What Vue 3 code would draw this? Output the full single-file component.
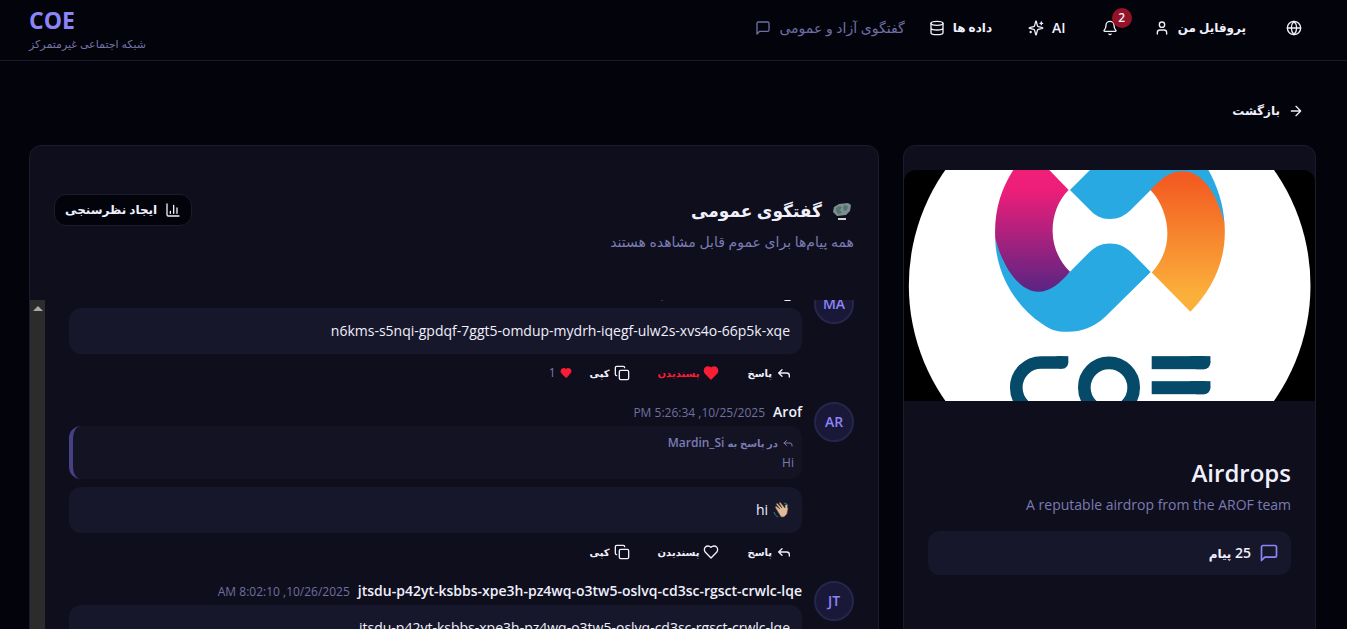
<script setup>
const messages = [
  {
    id: 1,
    initials: 'MA',
    author: 'Mardin_Si',
    date: '10/25/2025, 5:20:07 PM',
    text: 'n6kms-s5nqi-gpdqf-7ggt5-omdup-mydrh-iqegf-ulw2s-xvs4o-66p5k-xqe',
    liked: true,
    likes: 1,
  },
  {
    id: 2,
    initials: 'AR',
    author: 'Arof',
    date: '10/25/2025, 5:26:34 PM',
    replyTo: { author: 'Mardin_Si', text: 'Hi' },
    text: 'hi',
    wave: true,
  },
  {
    id: 3,
    initials: 'JT',
    author: 'jtsdu-p42yt-ksbbs-xpe3h-pz4wq-o3tw5-oslvq-cd3sc-rgsct-crwlc-lqe',
    date: '10/26/2025, 8:02:10 AM',
    text: 'jtsdu-p42yt-ksbbs-xpe3h-pz4wq-o3tw5-oslvq-cd3sc-rgsct-crwlc-lqe',
  },
]
</script>

<template>
  <div class="page" dir="rtl">
    <header class="topbar">
      <nav class="nav">
        <button type="button" class="nav-btn" aria-label="زبان">
          <svg class="icon" viewBox="0 0 24 24"><circle cx="12" cy="12" r="10" /><path d="M12 2a14.5 14.5 0 0 0 0 20 14.5 14.5 0 0 0 0-20M2 12h20" /></svg>
        </button>
        <a href="#profile" class="nav-btn">
          <span class="fa">پروفایل من</span>
          <svg class="icon" viewBox="0 0 24 24"><circle cx="12" cy="7" r="4" /><path d="M19 21v-2a4 4 0 0 0-4-4H9a4 4 0 0 0-4 4v2" /></svg>
        </a>
        <button type="button" class="nav-btn bell" aria-label="اعلان‌ها">
          <svg class="icon" viewBox="0 0 24 24"><path d="M10.3 21a2 2 0 0 0 3.4 0M3.3 15.3A1 1 0 0 0 4 17h16a1 1 0 0 0 .7-1.7C19.4 14 18 12.5 18 8A6 6 0 0 0 6 8c0 4.500-1.400 6-2.700 7.300" /></svg>
          <span class="badge">2</span>
        </button>
        <a href="#ai" class="nav-btn">
          <span>AI</span>
          <svg class="icon" viewBox="0 0 24 24"><path d="M9.900 15.500A2 2 0 0 0 8.500 14.100l-6.100-1.600a.5.5 0 0 1 0-1l6.100-1.600A2 2 0 0 0 9.900 8.500l1.600-6.100a.5.5 0 0 1 1 0l1.600 6.100a2 2 0 0 0 1.400 1.400l6.100 1.600a.5.5 0 0 1 0 1l-6.100 1.600a2 2 0 0 0-1.400 1.400l-1.600 6.100a.5.5 0 0 1-1 0zM20 3v4M22 5h-4M4 17v2M5 18H3" /></svg>
        </a>
        <a href="#data" class="nav-btn">
          <span class="fa">داده ها</span>
          <svg class="icon" viewBox="0 0 24 24"><ellipse cx="12" cy="5" rx="9" ry="3" /><path d="M3 5v14a9 3 0 0 0 18 0V5M3 12a9 3 0 0 0 18 0" /></svg>
        </a>
        <a href="#chat" class="nav-link">
          <span>گفتگوی آزاد و عمومی</span>
          <svg class="icon" viewBox="0 0 24 24"><path d="M21 15a2 2 0 0 1-2 2H7l-4 4V5a2 2 0 0 1 2-2h14a2 2 0 0 1 2 2z" /></svg>
        </a>
      </nav>
      <div class="brand">
        <strong class="brand-name">COE</strong>
        <span class="brand-sub">شبکه اجتماعی غیرمتمرکز</span>
      </div>
    </header>

    <main class="content">
      <button type="button" class="back">
        <svg class="icon" viewBox="0 0 24 24"><path d="M5 12h14M12 5l7 7-7 7" /></svg>
        <span class="fa">بازگشت</span>
      </button>

      <div class="columns">
        <aside class="card side">
          <svg class="cover" viewBox="42 105 1233 693" preserveAspectRatio="xMidYMid slice" role="img" aria-label="COE">
            <defs>
              <linearGradient id="pink" gradientUnits="userSpaceOnUse" x1="0" y1="160" x2="0" y2="465">
                <stop offset="0" stop-color="#ef1e79" />
                <stop offset="1" stop-color="#5c2483" />
              </linearGradient>
              <linearGradient id="orange" gradientUnits="userSpaceOnUse" x1="0" y1="130" x2="0" y2="480">
                <stop offset="0" stop-color="#f35b21" />
                <stop offset="1" stop-color="#fbb03b" />
              </linearGradient>
              <clipPath id="arc-cut"><rect x="350" y="650" width="166" height="220" /></clipPath>
            </defs>
            <rect x="42" y="105" width="1233" height="693" fill="#000" />
            <circle cx="659" cy="451" r="602" fill="#fff" />
            <path fill="#29a9e1" d="M540 165 600 105H955C980 150 1000 205 1003 264L878 140 782 165 722 225C705 242 685 252 659 252S615 242 597 222Z" />
            <path fill="#29a9e1" d="M316 310C345 400 390 460 445 460 480 460 510 440 540 410L590 360C610 338 630 325 659 325S705 335 722 350L782 411 645 546C610 578 575 590 535 590S480 583 455 565C380 515 318 420 316 310Z" />
            <path fill="url(#pink)" d="M370 105H478L536 165C505 195 488 240 488 288S508 378 540 410C510 445 480 470 445 470 390 470 340 400 316 310 312 230 332 165 370 105Z" />
            <path fill="url(#orange)" d="M781 165C820 125 840 109 878 109 940 109 980 180 1003 262 1012 370 970 460 901 530L785 412C815 380 832 340 832 295S815 200 781 165Z" />
            <g fill="none" stroke="#054a68" stroke-width="38">
              <rect x="379" y="682" width="320" height="150" rx="75" clip-path="url(#arc-cut)" />
              <circle cx="657" cy="757" r="74" />
            </g>
            <g fill="#054a68">
              <rect x="500" y="663" width="35" height="19" />
              <rect x="497" y="663" width="38" height="38" rx="19" />
              <rect x="785" y="663" width="157" height="39" />
              <rect x="900" y="663" width="61" height="19" />
              <rect x="900" y="663" width="61" height="39" rx="19" />
              <rect x="785" y="738" width="157" height="39" />
              <rect x="900" y="738" width="61" height="19" />
              <rect x="900" y="738" width="61" height="39" rx="19" />
            </g>
          </svg>
          <div class="side-body">
            <h1 class="side-title">Airdrops</h1>
            <p class="side-text">A reputable airdrop from the AROF team</p>
            <div class="stat">
              <svg class="icon-lg" viewBox="0 0 24 24"><path d="M21 15a2 2 0 0 1-2 2H7l-4 4V5a2 2 0 0 1 2-2h14a2 2 0 0 1 2 2z" /></svg>
              <span>25 <span class="fa">پیام</span></span>
            </div>
          </div>
        </aside>

        <section class="card chat">
          <div class="chat-head">
            <div>
              <h2 class="chat-title">
                <svg class="emblem" viewBox="0 0 20 20" aria-hidden="true">
                  <path fill="#7b8f90" d="M2 6 7 3l9-1 3 2-1 6-4 4-9 1-4-4z" />
                  <path fill="#56736f" d="m4 7 3-2 3 1-2 3 2 3-4 1-2-3zM12 4l4 1-1 4-3 1-1-3z" />
                  <path fill="#d8d2d0" d="M6 17h8v2H6z" />
                </svg>
                <span>گفتگوی عمومی</span>
              </h2>
              <p class="chat-sub">همه پیام‌ها برای عموم قابل مشاهده هستند</p>
            </div>
            <button type="button" class="poll">
              <svg class="icon" viewBox="0 0 24 24"><path d="M3 3v16a2 2 0 0 0 2 2h16M18 17V9M13 17V5M8 17v-3" /></svg>
              <span class="fa">ایجاد نظرسنجی</span>
            </button>
          </div>

          <div class="scroller">
            <div class="messages">
              <article v-for="m in messages" :key="m.id" class="message">
                <div class="avatar">{{ m.initials }}</div>
                <div class="message-body">
                  <div class="meta">
                    <span class="author">{{ m.author }}</span>
                    <span class="date">{{ m.date }}</span>
                  </div>
                  <div v-if="m.replyTo" class="quote">
                    <div class="quote-head">
                      <svg class="icon-xs" viewBox="0 0 24 24"><path d="M9 17 4 12l5-5M20 18v-2a4 4 0 0 0-4-4H4" /></svg>
                      <span><span class="fa-sm">در پاسخ به</span> {{ m.replyTo.author }}</span>
                    </div>
                    <div>{{ m.replyTo.text }}</div>
                  </div>
                  <div class="bubble">
                    <svg v-if="m.wave" class="wave" viewBox="0 0 18 18" aria-hidden="true">
                      <path fill="#dfb998" stroke="#4a3930" stroke-width=".6" d="m3 6 1-1 4 3-4-5 1-1 5 5-3-5 1-1 5 6V4l2-1 1 5-1 5-3 3H9z" />
                      <path fill="none" stroke="#2f7a78" d="M12 2q3 0 4 3M2 11q1 4 4 5" />
                    </svg>
                    <span>{{ m.text }}</span>
                  </div>
                  <div class="actions">
                    <button type="button" class="action">
                      <svg class="icon-sm" viewBox="0 0 24 24"><path d="M9 17 4 12l5-5M20 18v-2a4 4 0 0 0-4-4H4" /></svg>
                      <span class="fa-sm">پاسخ</span>
                    </button>
                    <button type="button" class="action" :class="{ liked: m.liked }">
                      <svg class="icon" viewBox="0 0 24 24"><path d="M19 14c1.500-1.500 3-3.200 3-5.500A5.500 5.500 0 0 0 16.500 3c-1.800 0-3 .5-4.500 2-1.500-1.500-2.700-2-4.500-2A5.500 5.500 0 0 0 2 8.500c0 2.300 1.500 4 3 5.500l7 7z" /></svg>
                      <span class="fa-sm">پسندیدن</span>
                    </button>
                    <button type="button" class="action">
                      <svg class="icon" viewBox="0 0 24 24"><rect x="8" y="8" width="14" height="14" rx="2" /><path d="M4 16c-1.100 0-2-.9-2-2V4c0-1.100.9-2 2-2h10c1.100 0 2 .9 2 2" /></svg>
                      <span class="fa-sm">کپی</span>
                    </button>
                    <span v-if="m.likes" class="likes">
                      <svg class="icon-xs" viewBox="0 0 24 24"><path d="M19 14c1.500-1.500 3-3.200 3-5.500A5.500 5.500 0 0 0 16.500 3c-1.800 0-3 .5-4.500 2-1.500-1.500-2.700-2-4.500-2A5.500 5.500 0 0 0 2 8.500c0 2.300 1.500 4 3 5.500l7 7z" /></svg>
                      <span>{{ m.likes }}</span>
                    </span>
                  </div>
                </div>
              </article>
            </div>
            <div class="scrollbar" aria-hidden="true"><span class="scroll-arrow" /></div>
          </div>
        </section>
      </div>
    </main>
  </div>
</template>

<style>
body {
  margin: 0;
  background: #03030c;
}
</style>

<style scoped>
* {
  box-sizing: border-box;
}

.page {
  height: 100vh;
  overflow: hidden;
  background: #03030c;
  color: #f0f0fc;
  font-family: "Segoe UI", "Open Sans", "DejaVu Sans", sans-serif;
  font-size: 14px;
  line-height: 20px;
}

h1,
h2,
p {
  margin: 0;
}

button {
  border: 0;
  background: none;
  color: inherit;
  font: inherit;
  cursor: pointer;
}

a {
  color: inherit;
  text-decoration: none;
}

svg {
  flex: none;
}

/* bold Persian runs wide next to the Latin text */
.fa {
  font-size: 12px;
}

.fa-sm {
  font-size: 10px;
}

.icon,
.icon-lg,
.icon-sm,
.icon-xs {
  width: 16px;
  height: 16px;
  fill: none;
  stroke: currentColor;
  stroke-width: 2;
  stroke-linecap: round;
  stroke-linejoin: round;
}

.icon-lg {
  width: 20px;
  height: 20px;
}

.icon-xs {
  width: 12px;
  height: 12px;
}

.topbar {
  display: flex;
  justify-content: space-between;
  align-items: center;
  height: 61px;
  padding: 0 33px 0 29px;
  border-bottom: 1px solid #1b1b2b;
}

.nav {
  display: flex;
  align-items: center;
  gap: 12px;
  padding-bottom: 4px;
}

.nav-btn,
.nav-link {
  display: flex;
  align-items: center;
  gap: 8px;
  white-space: nowrap;
}

.nav-btn {
  height: 36px;
  padding: 0 12px;
  font-weight: 600;
}

.nav-btn:first-child {
  margin-left: 4px;
}

.nav-link {
  color: #6f6fa3;
}

.bell {
  position: relative;
}

.badge {
  position: absolute;
  top: -2px;
  right: -2px;
  width: 20px;
  height: 20px;
  border-radius: 50%;
  background: #951327;
  font-size: 12px;
  text-align: center;
}

.brand {
  display: flex;
  flex-direction: column;
  align-items: flex-end;
}

.brand-name {
  color: #8c85f7;
  font-size: 23px;
  line-height: 28px;
}

.brand-sub {
  color: #7474a4;
  font-size: 11px;
  line-height: 20px;
}

.content {
  padding: 32px 31px 0 29px;
}

.back {
  display: flex;
  align-items: center;
  gap: 8px;
  height: 36px;
  padding: 0 12px;
  font-weight: 600;
}

.columns {
  display: grid;
  grid-template-columns: repeat(3, 1fr);
  gap: 24px;
  margin-top: 16px;
}

.card {
  min-width: 0;
  height: 640px;
  border: 1px solid #1b1b2b;
  border-radius: 12px;
  background: #0e0e1c;
}

.side {
  padding-top: 24px;
}

.cover {
  display: block;
  width: 100%;
  aspect-ratio: 16 / 9;
  border-radius: 12px 12px 0 0;
}

.side-body {
  padding: 56px 24px 24px;
}

.side-title {
  font-size: 24px;
  font-weight: 600;
  line-height: 32px;
}

.side-text {
  margin-top: 6px;
  color: #7b7bb3;
}

.stat {
  display: flex;
  align-items: center;
  gap: 8px;
  height: 44px;
  margin-top: 16px;
  padding: 0 12px;
  border-radius: 12px;
  background: #17172b;
  font-weight: 600;
}

.stat .icon-lg {
  color: #8c85f7;
}

.chat {
  display: flex;
  flex-direction: column;
  grid-column: span 2;
}

.chat-head {
  display: flex;
  justify-content: space-between;
  align-items: flex-start;
  padding: 48px 24px;
}

.chat-title {
  display: flex;
  align-items: center;
  gap: 8px;
  font-size: 17px;
  line-height: 34px;
}

.emblem {
  width: 24px;
  height: 20px;
}

.chat-sub {
  margin-top: 4px;
  color: #7b7bb3;
}

.poll {
  display: flex;
  align-items: center;
  gap: 8px;
  height: 32px;
  padding: 0 10px;
  border: 1px solid #1b1b2b;
  border-radius: 12px;
  background: #03030c;
  font-weight: 600;
}

.scroller {
  display: flex;
  flex: 1;
  min-height: 0;
}

.messages {
  display: flex;
  flex: 1;
  flex-direction: column;
  gap: 15px;
  min-width: 0;
  padding: 0 24px;
  overflow: hidden;
}

.message {
  display: flex;
  gap: 12px;
}

/* the list is scrolled a little past the first message */
.message:first-child {
  margin-top: -16px;
}

.avatar {
  display: grid;
  flex: none;
  place-items: center;
  width: 40px;
  height: 40px;
  border: 2px solid #26264a;
  border-radius: 50%;
  background: #1a1838;
  color: #8c85f7;
  font-weight: 600;
}

.message-body {
  flex: 1;
  min-width: 0;
}

.meta {
  display: flex;
  align-items: baseline;
  gap: 8px;
  height: 20px;
  margin-bottom: 4px;
  white-space: nowrap;
}

.author {
  font-weight: 600;
}

.date {
  color: #7070a0;
  font-size: 12px;
}

.quote {
  height: 53px;
  margin-bottom: 8px;
  padding: 7px 8px;
  border-left: 4px solid #474087;
  border-radius: 12px;
  background: #131324;
  color: #7b7bb3;
  font-size: 12px;
}

.quote-head {
  display: flex;
  align-items: center;
  gap: 4px;
  height: 20px;
  font-weight: 600;
}

.bubble {
  display: flex;
  align-items: center;
  gap: 4px;
  height: 46px;
  padding: 0 12px;
  border-radius: 12px;
  background: #17172b;
}

.wave {
  width: 18px;
  height: 18px;
}

.actions {
  display: flex;
  align-items: center;
  gap: 8px;
  margin-top: 5px;
}

.action {
  display: flex;
  align-items: center;
  gap: 4px;
  height: 28px;
  padding: 0 10px;
  font-size: 12px;
  font-weight: 600;
}

.liked {
  color: #fb1c36;
}

.liked .icon,
.likes .icon-xs {
  fill: #fb1c36;
  stroke: #fb1c36;
}

.likes {
  display: flex;
  align-items: center;
  gap: 4px;
  color: #7b7bb3;
  font-size: 12px;
}

.scrollbar {
  display: flex;
  flex: none;
  justify-content: center;
  width: 15px;
  background: #2c2c2c;
}

.scroll-arrow {
  width: 0;
  height: 0;
  margin-top: 6px;
  border: 5px solid transparent;
  border-top: 0;
  border-bottom-color: #a9a9a9;
}
</style>
